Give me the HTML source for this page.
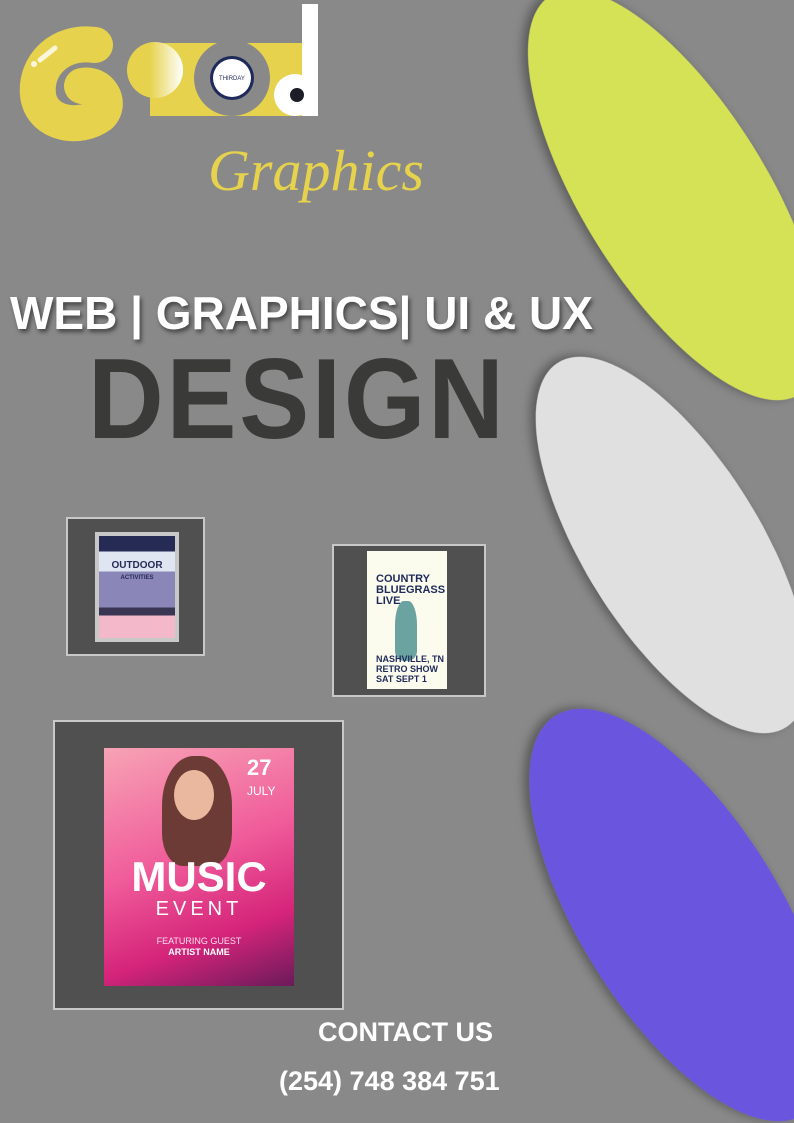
<!DOCTYPE html>
<html style="overflow:hidden"><head><style>
body{margin:0;width:794px;height:1123px;background:#898989;position:relative;overflow:hidden;font-family:"Liberation Sans",sans-serif}
.a{position:absolute}
.box{position:absolute;background:#505050;border:2px solid #c8c8c8;box-sizing:border-box}
</style></head><body>
<svg class="a" style="left:0;top:0" width="794" height="1123">
<defs><filter id="s" x="-20%" y="-20%" width="140%" height="140%"><feDropShadow dx="-4" dy="4" stdDeviation="5" flood-opacity="0.35"/></filter>
<linearGradient id="g" x1="0" x2="1"><stop offset=".4" stop-color="#e6d24c"/><stop offset="1" stop-color="#fff"/></linearGradient></defs>
<ellipse cx="675" cy="195" rx="235" ry="92" transform="rotate(58 675 195)" fill="#d6e254" filter="url(#s)"/>
<ellipse cx="672" cy="545" rx="215" ry="88" transform="rotate(58 672 545)" fill="#e0e0e0" filter="url(#s)"/>
<ellipse cx="680" cy="915" rx="235" ry="100" transform="rotate(58 680 915)" fill="#6b55de" filter="url(#s)"/>
<path d="M95 45 C60 40 35 65 38 95 C42 125 80 130 100 115 C112 103 100 82 82 86" fill="none" stroke="#e6d24c" stroke-width="36" stroke-linecap="round"/>
<path d="M40 60 L55 48" stroke="#fff" stroke-width="5" stroke-linecap="round" opacity=".8"/>
<circle cx="34" cy="64" r="3" fill="#fff" opacity=".8"/>
<rect x="150" y="43" width="152" height="73" fill="#e6d24c"/>
<circle cx="155" cy="70" r="28" fill="url(#g)"/>
<circle cx="232" cy="78" r="38" fill="#898989"/>
<circle cx="232" cy="78" r="22" fill="#1f2a5a"/>
<circle cx="232" cy="78" r="19" fill="#fff"/>
<text x="232" y="80" font-size="6" text-anchor="middle" fill="#1f2a5a">THIRDAY</text>
<circle cx="295" cy="95" r="21" fill="#fff"/>
<rect x="302" y="4" width="16" height="112" fill="#fff"/>
<circle cx="297" cy="95" r="7" fill="#1d1d28"/>
<text x="208" y="190" font-family="Liberation Serif" font-style="italic" font-size="58" fill="#e6d24c">Graphics</text>
</svg>
<div class="a" style="left:10px;top:286px;font-weight:bold;font-size:46px;color:#fff;text-shadow:2px 3px 4px rgba(0,0,0,.5);white-space:nowrap">WEB | GRAPHICS| UI &amp; UX</div>
<div class="a" style="left:88px;top:345px;font-weight:bold;font-size:114px;letter-spacing:3px;color:#3a3a38;transform:scaleX(.92);transform-origin:0 0;white-space:nowrap;line-height:110px">DESIGN</div>
<div class="box" style="left:66px;top:517px;width:139px;height:139px"><div class="a" style="left:27px;top:13px;width:84px;height:110px;background:#c8c8c8"><div class="a" style="left:4px;top:4px;width:76px;height:102px;background:linear-gradient(#262b55 0 15%,#dfe6f2 15% 35%,#8a86b8 35% 70%,#3a3552 70% 78%,#f4b8cb 78%)"></div><div class="a" style="left:6px;top:28px;width:72px;text-align:center;font-size:10px;font-weight:bold;color:#262b55">OUTDOOR<br><span style="font-size:6px">ACTIVITIES</span></div></div></div>
<div class="box" style="left:332px;top:544px;width:154px;height:153px"><div class="a" style="left:33px;top:5px;width:80px;height:138px;background:#fbfbee"><div class="a" style="left:9px;top:23px;font-weight:bold;font-size:11px;line-height:11px;color:#1f2a5a">COUNTRY<br>BLUEGRASS<br>LIVE</div><div class="a" style="left:28px;top:50px;width:22px;height:60px;background:#6aa3a0;border-radius:40% 40% 10px 10px"></div><div class="a" style="left:9px;top:103px;font-weight:bold;font-size:9px;line-height:10px;color:#1f2a5a">NASHVILLE, TN<br>RETRO SHOW<br>SAT SEPT 1</div></div></div>
<div class="box" style="left:53px;top:720px;width:291px;height:290px"><div class="a" style="left:49px;top:26px;width:190px;height:238px;background:linear-gradient(160deg,#f7a3b5 0%,#f05c9a 45%,#d5247a 75%,#6b1a5a 100%)"><div class="a" style="left:58px;top:8px;width:70px;height:110px;border-radius:45% 45% 30% 30%;background:#6d3b35"></div><div class="a" style="left:70px;top:22px;width:40px;height:50px;border-radius:50%;background:#e9b89e"></div><div class="a" style="left:143px;top:10px;color:#fff;font-weight:bold;font-size:22px;line-height:20px">27<br><span style="font-size:12px;font-weight:normal">JULY</span></div><div class="a" style="left:0;top:108px;width:190px;text-align:center;color:#fff;font-weight:900;font-size:42px;line-height:42px">MUSIC</div><div class="a" style="left:0;top:150px;width:190px;text-align:center;color:#fff;font-size:20px;letter-spacing:4px">EVENT</div><div class="a" style="left:0;top:188px;width:190px;text-align:center;color:#fde;font-size:9px;line-height:11px">FEATURING GUEST<br><b style="color:#fff">ARTIST NAME</b></div></div></div>
<div class="a" style="left:318px;top:1017px;font-weight:bold;font-size:27px;color:#fff">CONTACT US</div>
<div class="a" style="left:279px;top:1066px;font-weight:bold;font-size:27px;color:#fff">(254) 748 384 751</div>
</body></html>
